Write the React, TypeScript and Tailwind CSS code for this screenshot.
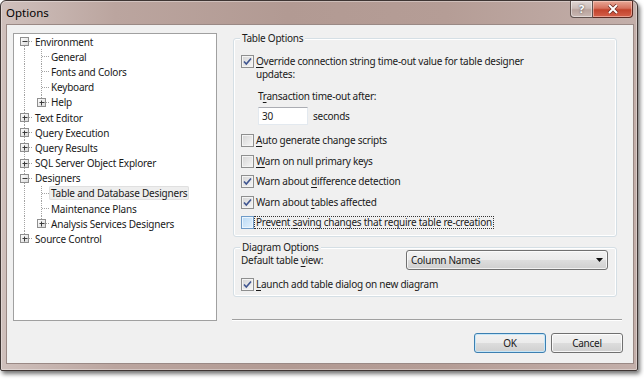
import React from "react";

type Row = {
  label: string;
  level: 0 | 1;
  exp?: "plus" | "minus";
  first?: boolean;
  lastRoot?: boolean;
  lastChild?: boolean;
  selected?: boolean;
};

const rows: Row[] = [
  { label: "Environment", level: 0, exp: "minus", first: true },
  { label: "General", level: 1 },
  { label: "Fonts and Colors", level: 1 },
  { label: "Keyboard", level: 1 },
  { label: "Help", level: 1, exp: "plus", lastChild: true },
  { label: "Text Editor", level: 0, exp: "plus" },
  { label: "Query Execution", level: 0, exp: "plus" },
  { label: "Query Results", level: 0, exp: "plus" },
  { label: "SQL Server Object Explorer", level: 0, exp: "plus" },
  { label: "Designers", level: 0, exp: "minus" },
  { label: "Table and Database Designers", level: 1, selected: true },
  { label: "Maintenance Plans", level: 1 },
  { label: "Analysis Services Designers", level: 1, exp: "plus", lastChild: true },
  { label: "Source Control", level: 0, exp: "plus", lastRoot: true },
];

const H = 15.2;
const CY = 7.5;

function ExpBox({ cx, kind, id }: { cx: number; kind: "plus" | "minus"; id: string }) {
  return (
    <g>
      <defs>
        <linearGradient id={id} x1="0" y1="0" x2="1" y2="1">
          <stop offset="0" stopColor="#ffffff" />
          <stop offset="1" stopColor="#d8d8d8" />
        </linearGradient>
      </defs>
      <rect x={cx - 4} y={CY - 4} width={8} height={8} fill={`url(#${id})`} stroke="#8f8f8f" />
      <line x1={cx - 2} x2={cx + 3} y1={CY} y2={CY} stroke="#3a3a3a" />
      {kind === "plus" && <line x1={cx} x2={cx} y1={CY - 2} y2={CY + 3} stroke="#3a3a3a" />}
    </g>
  );
}

function TreeGlyph({ row, i }: { row: Row; i: number }) {
  const w = row.level === 0 ? 19 : 35;
  const dot = { stroke: "#a3a3a3", strokeDasharray: "1 1", shapeRendering: "crispEdges" as const };
  const x0 = 10.5;
  const x1 = 27.5;
  return (
    <svg width={w} height={H} className="shrink-0 block">
      {row.level === 0 ? (
        <line x1={x0} x2={x0} y1={row.first ? CY : 0} y2={row.lastRoot ? CY : H} {...dot} />
      ) : (
        <line x1={x0} x2={x0} y1={0} y2={H} {...dot} />
      )}
      {row.level === 0 && <line x1={x0 + 4} x2={19} y1={CY} y2={CY} {...dot} />}
      {row.level === 1 && (
        <>
          <line x1={x1} x2={x1} y1={0} y2={row.lastChild ? CY : H} {...dot} />
          <line x1={row.exp ? x1 + 4 : x1} x2={35} y1={CY} y2={CY} {...dot} />
        </>
      )}
      {row.exp && <ExpBox cx={row.level === 0 ? x0 : x1} kind={row.exp} id={`g${i}`} />}
    </svg>
  );
}

function Check({ checked, hot }: { checked?: boolean; hot?: boolean }) {
  return (
    <span
      className={
        hot
          ? "shrink-0 w-[13px] h-[13px] border border-[#6f9bc8] bg-[linear-gradient(135deg,#b9d9f5,#e4f2fd)] shadow-[inset_0_0_0_1px_#eaf5fe] flex items-center justify-center"
          : "shrink-0 w-[13px] h-[13px] border border-[#8e8f8f] bg-[linear-gradient(135deg,#d4d4d4,#f7f7f7)] shadow-[inset_0_0_0_1px_#f4f4f4] flex items-center justify-center"
      }
    >
      {checked && (
        <svg width="11" height="11" viewBox="0 0 11 11">
          <path d="M2 5.5 L4.3 8 L9 2.5" fill="none" stroke="#3f5590" strokeWidth="1.6" />
        </svg>
      )}
    </span>
  );
}

function U({ children }: { children: React.ReactNode }) {
  return <span className="underline underline-offset-[2px] decoration-[1px]">{children}</span>;
}

function CheckRow({
  checked,
  hot,
  focus,
  children,
}: {
  checked?: boolean;
  hot?: boolean;
  focus?: boolean;
  children: React.ReactNode;
}) {
  return (
    <div className="flex items-center h-[13px] gap-[1px]">
      <Check checked={checked} hot={hot} />
      <span
        className={
          focus
            ? "leading-[11px] px-[1px] outline outline-1 outline-dotted outline-[#333] whitespace-nowrap"
            : "leading-[13px] px-[1px] whitespace-nowrap"
        }
      >
        {children}
      </span>
    </div>
  );
}

export default function App() {
  return (
    <div className="w-[644px] h-[379px] bg-white overflow-hidden font-['Noto_Sans',sans-serif] text-[10px] tracking-[-0.25px] text-[#1a1a1a]">
      <div className="w-[638px] h-[371px] rounded-t-[6px] rounded-b-[2px] border border-[#3e3533] bg-[linear-gradient(90deg,#cfc0bc_0%,#bba59f_18%,#b29a93_45%,#b59d96_70%,#c3afaa_100%)] shadow-[inset_0_0_0_1px_rgba(255,255,255,0.35),2px_3px_4px_rgba(0,0,0,0.55)] flex flex-col">
        {/* title bar */}
        <div className="h-[24px] flex items-start justify-between pl-[5px] pr-[4px]">
          <div className="h-[24px] flex items-center text-[11.5px] tracking-normal text-black">Options</div>
          <div className="flex">
            <div className="w-[23px] h-[17px] border border-[#5f514e] border-t-0 rounded-bl-[4px] bg-[linear-gradient(180deg,#e0d6d3_0%,#cbbcb8_45%,#b8a39d_55%,#c9b8b3_100%)] shadow-[inset_0_0_0_1px_rgba(255,255,255,0.45)] flex items-center justify-center text-[11px] tracking-normal font-bold text-white [text-shadow:0_0_2px_#333]">
              ?
            </div>
            <div className="w-[40px] h-[17px] border border-[#5a2a23] border-t-0 border-l-0 rounded-br-[4px] bg-[linear-gradient(180deg,#e8a896_0%,#d5725e_45%,#c2432c_55%,#d4604a_100%)] shadow-[inset_0_0_0_1px_rgba(255,220,210,0.5)] flex items-center justify-center">
              <svg width="12" height="10" viewBox="0 0 12 10">
                <path d="M2 1 L10 9 M10 1 L2 9" stroke="#6a2a20" strokeWidth="3.4" />
                <path d="M2 1 L10 9 M10 1 L2 9" stroke="#ffffff" strokeWidth="2" />
              </svg>
            </div>
          </div>
        </div>
        {/* client */}
        <div className="pl-[6px]">
          <div className="w-[626px] h-[338px] bg-[#f0f0f0] shadow-[0_0_0_1px_#9a8985] flex flex-col">
            <div className="flex pl-[6px] pt-[8px]">
              {/* tree */}
              <div className="w-[204px] h-[288px] bg-white border border-[#a0a0a0] text-[10px] tracking-[-0.2px]">
                {rows.map((r, i) => (
                  <div key={r.label} className="flex items-center h-[15.2px]">
                    <TreeGlyph row={r} i={i} />
                    <span
                      className={
                        r.selected
                          ? "px-[2px] leading-[14px] bg-[#eeeeee] shadow-[inset_0_0_0_1px_#e0e0e0] rounded-[2px] whitespace-nowrap"
                          : "px-[2px] leading-[14px] whitespace-nowrap"
                      }
                    >
                      {r.label}
                    </span>
                  </div>
                ))}
              </div>
              {/* right column */}
              <div className="ml-[15px] w-[390px] flex flex-col">
                <div className="relative mt-[5px] ml-[1px] w-[384px] h-[199px] border border-[#d5dfe5] rounded-[3px] shadow-[inset_0_0_0_1px_#ffffff] pl-[7px] pt-[16px]">
                  <span className="absolute left-[6px] top-[-6px] px-[2px] bg-[#f0f0f0] leading-[11px]">Table Options</span>
                  <div className="flex items-start gap-[1px]">
                    <Check checked />
                    <span className="px-[1px] leading-[12.5px]">
                      <U>O</U>verride connection string time-out value for table designer
                      <br />
                      updates:
                    </span>
                  </div>
                  <div className="ml-[17px] mt-[10px] leading-[13px]">
                    T<U>r</U>ansaction time-out after:
                  </div>
                  <div className="ml-[17px] mt-[4px] flex items-center">
                    <div className="w-[50px] h-[18px] bg-white border border-[#e3e9ef] border-t-[#abadb3] flex items-center pl-[3px]">
                      30
                    </div>
                    <span className="ml-[5px]">seconds</span>
                  </div>
                  <div className="mt-[9px] flex flex-col gap-[7.6px]">
                    <CheckRow>
                      <U>A</U>uto generate change scripts
                    </CheckRow>
                    <CheckRow>
                      <U>W</U>arn on null primary keys
                    </CheckRow>
                    <CheckRow checked>
                      Warn about <U>d</U>ifference detection
                    </CheckRow>
                    <CheckRow checked>
                      Warn about <U>t</U>ables affected
                    </CheckRow>
                    <CheckRow hot focus>
                      Prevent <U>s</U>aving changes that require table re-creation
                    </CheckRow>
                  </div>
                </div>
                <div className="relative mt-[10px] ml-[1px] w-[384px] h-[50px] border border-[#d5dfe5] rounded-[3px] shadow-[inset_0_0_0_1px_#ffffff] pl-[7px] pt-[2px]">
                  <span className="absolute left-[6px] top-[-6px] px-[2px] bg-[#f0f0f0] leading-[11px]">Diagram Options</span>
                  <div className="flex items-center h-[20px]">
                    <span className="w-[165px] whitespace-nowrap leading-[11px] mt-[1px]">
                      Default table <U>v</U>iew:
                    </span>
                    <div className="w-[202px] h-[20px] border border-[#707070] rounded-[3px] bg-[linear-gradient(180deg,#f2f2f2_0%,#ebebeb_50%,#dddddd_50%,#cfcfcf_100%)] shadow-[inset_0_0_0_1px_rgba(255,255,255,0.7)] flex items-center justify-between pl-[4px] pr-[4px]">
                      <span>Column Names</span>
                      <svg width="7" height="4" viewBox="0 0 7 4">
                        <path d="M0 0 H7 L3.5 4 Z" fill="#111" />
                      </svg>
                    </div>
                  </div>
                  <div className="mt-[7.5px]">
                    <CheckRow checked>
                      <U>L</U>aunch add table dialog on new diagram
                    </CheckRow>
                  </div>
                </div>
                <div className="mt-[22px] h-[2px] border-t border-[#a0a0a0] border-b border-b-white" />
              </div>
            </div>
            <div className="mt-[12px] flex justify-end gap-[5px] pr-[10px]">
              <div className="w-[72px] h-[20px] rounded-[3px] border border-[#3c7fb1] bg-[linear-gradient(180deg,#f2f2f2_0%,#ebebeb_50%,#dddddd_50%,#cfcfcf_100%)] shadow-[inset_0_0_0_1px_#c5e6f8] flex items-center justify-center">
                OK
              </div>
              <div className="w-[72px] h-[20px] rounded-[3px] border border-[#707070] bg-[linear-gradient(180deg,#f2f2f2_0%,#ebebeb_50%,#dddddd_50%,#cfcfcf_100%)] shadow-[inset_0_0_0_1px_rgba(255,255,255,0.8)] flex items-center justify-center">
                Cancel
              </div>
            </div>
          </div>
        </div>
      </div>
    </div>
  );
}
